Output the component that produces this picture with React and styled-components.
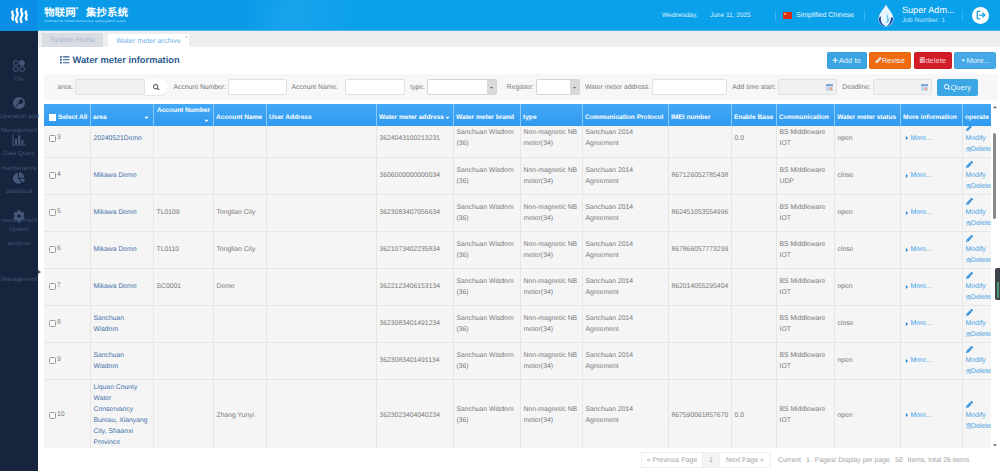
import styled, { createGlobalStyle } from 'styled-components'
import { FaList, FaSearch, FaPencilAlt, FaRegTrashAlt, FaPlus, FaCaretDown, FaCaretRight, FaCog, FaChartPie, FaTrashAlt, FaCaretUp } from 'react-icons/fa'
import { LogOut } from 'lucide-react'

const GlobalStyle = createGlobalStyle`
    html, body {
        margin: 0;
        height: 100%;
        overflow: hidden;
        background: #fff;
        font-family: "Liberation Sans", Arial, sans-serif;
        text-rendering: geometricPrecision;
    }
    * { box-sizing: border-box; }
`

const Page = styled.div`
    display: flex;
    height: 471px;
    width: 1000px;
    position: relative;
`

/* sidebar */
const Sidebar = styled.aside`
    width: 38px;
    flex: none;
    background: #16243d;
    display: flex;
    flex-direction: column;
    align-items: center;
    position: relative;
`
const LogoBox = styled.div`
    width: 100%;
    height: 31px;
    background: #0b8fe6;
    display: flex;
    align-items: center;
    justify-content: center;
    margin-bottom: 28px;
`
const NavItem = styled.div`
    height: ${p => p.$tall ? 'auto' : '37.7px'};
    margin-top: ${p => p.$tall ? '26px' : '0'};
    width: 100%;
    display: flex;
    flex-direction: column;
    align-items: center;
    color: #3f5474;
    font-size: 6.2px;
    line-height: 14.6px;
    text-align: center;
    white-space: nowrap;
`
const NavIcon = styled.div`
    height: 13px;
    display: flex;
    align-items: center;
    justify-content: center;
    color: #46597a;
    font-size: 12px;
    margin-bottom: 1px;
`
const Collapse = styled.div`
    position: absolute;
    right: -3px;
    top: 270px;
    width: 0;
    height: 0;
    border-top: 2px solid transparent;
    border-bottom: 2px solid transparent;
    border-left: 3px solid #555;
`

/* top bar */
const Main = styled.div`
    flex: 1;
    min-width: 0;
    display: flex;
    flex-direction: column;
`
const TopBar = styled.header`
    height: 31px;
    flex: none;
    display: flex;
    align-items: center;
    color: #fff;
    background: linear-gradient(103deg, #0a9ae8 0%, #0a9ae8 22%, #18a4ec 26%, #0ba0ea 34%, #0aa0ea 100%);
    border-bottom: 1px solid #45b4ef;
    padding-left: 6px;
`
const Brand = styled.div`
    width: 618px;
    flex: none;
    margin-top: -2px;
`
const BrandName = styled.div`
    font-family: "Noto Sans CJK SC", sans-serif;
    font-weight: 700;
    font-size: 10.6px;
    line-height: 13px;
    white-space: nowrap;
    sup {
        font-size: 5px;
        line-height: 0;
        margin-right: 5px;
    }
`
const BrandSub = styled.div`
    font-size: 2.9px;
    line-height: 4px;
    color: #b6e2fa;
    white-space: nowrap;
`
const DateText = styled.span`
    font-size: 6.5px;
    color: #dff3fd;
    width: ${p => p.$w}px;
    flex: none;
    white-space: nowrap;
`
const Divider = styled.span`
    width: 1px;
    height: 11px;
    background: #32b1ef;
    flex: none;
`
const Lang = styled.div`
    display: flex;
    align-items: center;
    gap: 4px;
    width: 88px;
    flex: none;
    padding-left: 7px;
    font-size: 7px;
    white-space: nowrap;
    color: #e3f5fe;
`
const UserBox = styled.div`
    display: flex;
    align-items: center;
    margin-left: 13px;
    gap: 8px;
    width: 84px;
    flex: none;
`
const UserName = styled.div`
    font-size: 9.1px;
    line-height: 11px;
    white-space: nowrap;
`
const UserJob = styled.div`
    font-size: 6.6px;
    line-height: 10px;
    color: #bfe7fb;
    white-space: nowrap;
`
const LogoutButton = styled.div`
    width: 17px;
    height: 17px;
    margin-left: 9px;
    border-radius: 50%;
    background: #fff;
    color: #0ba0ea;
    display: flex;
    align-items: center;
    justify-content: center;
`

/* tabs */
const TabBar = styled.div`
    height: 16px;
    flex: none;
    background: #eeeeee;
    display: flex;
    align-items: flex-end;
    padding-left: 4px;
    gap: 5px;
`
const Tab = styled.div`
    position: relative;
    height: ${p => p.$active ? '13px' : '14px'};
    width: ${p => p.$active ? '81px' : '61px'};
    background: ${p => p.$active ? '#fff' : '#d9dde3'};
    color: ${p => p.$active ? '#71b2e6' : '#a9b5c5'};
    font-size: 7.2px;
    line-height: 13px;
    text-align: center;
    white-space: nowrap;
`
const TabClose = styled.span`
    position: absolute;
    right: 1px;
    top: -2px;
    font-size: 6px;
    color: #9cc6ea;
`

/* page head */
const PageHead = styled.div`
    height: 25px;
    flex: none;
    display: flex;
    align-items: center;
    justify-content: space-between;
    padding: 1px 4px 0 22px;
`
const PageTitle = styled.h1`
    margin: 0;
    display: flex;
    align-items: center;
    gap: 3px;
    font-size: 9.3px;
    font-weight: 700;
    color: #2d5b8e;
    white-space: nowrap;
    svg { font-size: 9.5px; }
`
const Actions = styled.div`
    display: flex;
    gap: 2.5px;
`
const ActionButton = styled.button`
    width: ${p => p.$w}px;
    height: 17px;
    padding: 0;
    border: 1px solid rgba(0, 0, 0, 0.05);
    border-radius: 2px;
    background: ${p => p.$bg};
    color: ${p => p.$fg || '#e9f5fc'};
    font-family: inherit;
    font-size: 7.6px;
    display: flex;
    align-items: center;
    justify-content: center;
    white-space: nowrap;
    svg { font-size: 6.5px; }
`

/* filter band */
const Filters = styled.div`
    height: 26px;
    flex: none;
    margin: 2px 2px 4px 6px;
    background: #f7f7f7;
    border-radius: 2px;
    display: grid;
    grid-template-columns: 31px 93px 60px 59px 58px 60px 22px 70px 39px 44px 72px 75px 51px 59px 36px 59px 41px;
    align-items: center;
`
const FilterLabel = styled.label`
    font-size: 6.8px;
    color: #777;
    text-align: right;
    padding-right: ${p => p.$pad ?? 2}px;
    white-space: nowrap;
`
const TextBox = styled.div`
    height: 16px;
    background: ${p => p.$off ? '#f1f1f1' : '#fff'};
    border: 1px solid #e2e2e2;
    border-radius: 2px;
    display: flex;
    align-items: center;
    justify-content: flex-end;
    padding-right: 3px;
`
const SearchGroup = styled.div`
    display: flex;
    height: 16px;
`
const SearchInput = styled.div`
    width: 70px;
    background: #f1f1f1;
    border: 1px solid #e2e2e2;
    border-radius: 2px 0 0 2px;
`
const SearchButton = styled.div`
    flex: 1;
    background: #fff;
    border-radius: 0 8px 8px 0;
    box-shadow: 0 1px 0 #e6e6e6;
    color: #555;
    font-size: 6.5px;
    display: flex;
    align-items: center;
    justify-content: center;
`
const SelectBox = styled.div`
    height: 16px;
    background: #fff;
    border: 1px solid #d6d6d6;
    border-radius: 2px;
    display: flex;
    justify-content: flex-end;
    overflow: hidden;
`
const SelectArrow = styled.span`
    width: 9px;
    background: #d9d9d9;
    color: #666;
    font-size: 5px;
    display: flex;
    align-items: center;
    justify-content: center;
`
const QueryButton = styled.button`
    grid-column: 17;
    width: 41px;
    height: 17px;
    padding: 0;
    border: 0;
    border-radius: 2px;
    background: #3aa6e4;
    color: #e9f5fc;
    font-family: inherit;
    font-size: 7.6px;
    margin-left: 5px;
    display: flex;
    align-items: center;
    justify-content: center;
    svg { font-size: 6.5px; }
`

/* table */
const TableArea = styled.div`
    display: flex;
    height: 344px;
    flex: none;
    padding-left: 6px;
    position: relative;
`
const TableWrap = styled.div`
    width: 947px;
    height: 344px;
    flex: none;
    display: flex;
    flex-direction: column;
`
const Table = styled.table`
    table-layout: fixed;
    width: 947px;
    border-collapse: collapse;
`
const HeadRow = styled.tr`
    height: 22px;
    background: linear-gradient(#45a8f5, #2f9af0);
`
const Th = styled.th`
    padding: 5px 2.5px 0;
    border-left: 1px solid #8cc8f5;
    color: #fff;
    font-size: 6.6px;
    font-weight: 700;
    line-height: 9px;
    text-align: left;
    white-space: nowrap;
    vertical-align: middle;
    overflow: hidden;
    &:first-child {
        border-left: 0;
        padding-left: 5px;
    }
`
const HeadInner = styled.div`
    display: flex;
    align-items: center;
    justify-content: ${p => p.$split ? 'space-between' : 'flex-start'};
    svg { font-size: 7px; flex: none; }
`
const StackedTh = styled(Th)`
    padding: 0 2.5px;
`
const StackedHead = styled.div`
    display: flex;
    flex-direction: column;
    align-items: flex-end;
    line-height: 8px;
    svg { font-size: 7px; margin-top: 2px; }
`
const BodyClip = styled.div`
    flex: 1;
    overflow: hidden;
`
const ScrolledTable = styled(Table)`
    margin-top: -6px;
`
const Row = styled.tr`
    height: ${p => p.$h}px;
    background: #f5f5f5;
    border-bottom: 1px solid #e6e6e6;
`
const Td = styled.td`
    padding: 0 3px;
    border-left: 1px solid #e6e6e6;
    color: #7a7a7a;
    font-size: 6.8px;
    line-height: 11px;
    vertical-align: middle;
    overflow: hidden;
    &:first-child { border-left: 0; }
    &:last-child { padding-right: 0; }
`
const CheckCell = styled.div`
    display: flex;
    align-items: center;
    gap: 1px;
    padding-left: 2px;
`
const RowNumber = styled.span`
    margin-top: -2px;
`
const Check = styled.span`
    width: 7px;
    height: 7px;
    flex: none;
    background: ${p => p.$head ? '#fff' : '#fbfbfb'};
    border: 1px solid ${p => p.$head ? '#fff' : '#999'};
    border-radius: ${p => p.$head ? '0' : '1.5px'};
    margin-right: ${p => p.$head ? '2px' : '0'};
`
const AreaLink = styled.span`
    display: block;
    max-width: 55.5px;
    color: #3f70a8;
`
const MoreLink = styled.span`
    display: flex;
    align-items: center;
    gap: 1px;
    color: #3fa3ea;
    svg { font-size: 6px; color: #1f86d8; }
`
const OpCell = styled.div`
    display: flex;
    flex-direction: column;
    color: #4ba3e3;
    font-size: 6.9px;
    white-space: nowrap;
`
const OpLine = styled.span`
    height: 11px;
    display: flex;
    align-items: center;
    svg {
        flex: none;
        font-size: ${p => p.$big ? 7 : 5.5}px;
        color: ${p => p.$big ? '#1f86d8' : '#5aa9e3'};
    }
`
const ScrollTrack = styled.div`
    width: 7px;
    height: 344px;
    display: flex;
    flex-direction: column;
    align-items: center;
    color: #666;
    font-size: 6px;
`
const ScrollThumb = styled.div`
    width: 3.5px;
    height: 86px;
    margin: 23px 0 auto;
    background: #8a8a8a;
    border-radius: 2px;
`
const SideHandle = styled.div`
    position: absolute;
    right: 0;
    top: 268px;
    width: 5px;
    height: 32px;
    border-radius: 2px 0 0 2px;
    background: #3f444c;
    display: flex;
    align-items: flex-end;
    padding: 0 0 2px 2px;
    &::after {
        content: '';
        width: 2px;
        height: 16px;
        background: #4f9a74;
    }
`

/* pager */
const Pager = styled.div`
    height: 16px;
    flex: none;
    margin: 4px 0 0 604px;
    display: flex;
    align-items: center;
    font-size: 6.9px;
    color: #a3a3a3;
    white-space: nowrap;
`
const PagerButton = styled.div`
    width: ${p => p.$w}px;
    height: 16px;
    border: 1px solid #eeeeee;
    margin-left: -1px;
    background: ${p => p.$on ? '#f3f3f3' : '#fff'};
    display: flex;
    align-items: center;
    justify-content: center;
`
const PagerInfo = styled.div`
    margin-left: 7px;
    display: flex;
    align-items: center;
    gap: 5px;
`

const columns = [46, 63, 60, 53, 110, 77, 67, 62, 86, 63, 45, 58, 66, 62, 29]

const base = {
    brand: 'Sanchuan Wisdom (36)',
    type: 'Non-magnetic NB meter(34)',
    protocol: 'Sanchuan 2014 Agreement',
}

const rows = [
    { id: 3, area: '20240521Demo', address: '3624043100213231', base: '0.0', link: 'IOT', status: 'open' },
    { id: 4, area: 'Mikawa Demo', address: '3606000000000034', imei: '867126052785438', link: 'UDP', status: 'close' },
    { id: 5, area: 'Mikawa Demo', number: 'TL0109', name: 'Tongliao City', address: '3623083407056634', imei: '862451053554996', link: 'IOT', status: 'open' },
    { id: 6, area: 'Mikawa Demo', number: 'TL0110', name: 'Tongliao City', address: '3621073402235834', imei: '867866057773299', link: 'IOT', status: 'close' },
    { id: 7, area: 'Mikawa Demo', number: 'SC0001', name: 'Demo', address: '3622123406153134', imei: '862014055295404', link: 'IOT', status: 'open' },
    { id: 8, area: 'Sanchuan Wisdom', address: '3623083401491234', link: 'IOT', status: 'close' },
    { id: 9, area: 'Sanchuan Wisdom', address: '3623083401491134', link: 'IOT', status: 'open' },
    { id: 10, area: 'Liquan County Water Conservancy Bureau, Xianyang City, Shaanxi Province', name: 'Zhang Yunyi', address: '3623023404040234', imei: '867590061857670', base: '0.0', link: 'IOT', status: 'open', height: 72 },
]

function Cols() {
    return (
        <colgroup>
            {columns.map((w, i) => <col key={i} width={w} />)}
        </colgroup>
    )
}

function WaveLogo() {
    return (
        <svg width="19" height="17" viewBox="0 0 19 17" fill="none" stroke="#fff" strokeWidth="2.3" strokeLinecap="round">
            <path d="M2.5 4.5 c-1.5 2 1.5 3 0.5 4.5 s-1 2 0 3.5" />
            <path d="M7 2 c-2 2.5 2 4 0.5 6.5 s-2 3.5 -0.5 6.5" />
            <path d="M11.5 2 c-2 2.5 2 4 0.5 6.5 s-2 3.5 -0.5 6.5" />
            <path d="M16 4.5 c-1.5 2 1.5 3 0.5 4.5 s-1 2 0 3.5" />
        </svg>
    )
}

function FileIcon() {
    return (
        <svg width="12" height="12" viewBox="0 0 12 12" fill="none" stroke="#46597a" strokeWidth="1">
            <rect x="0.7" y="0.7" width="4.4" height="4.4" rx="1.2" />
            <circle cx="9" cy="3" r="2.4" fill="#46597a" />
            <rect x="0.7" y="6.9" width="4.4" height="4.4" rx="1.2" />
            <rect x="6.9" y="6.9" width="4.4" height="4.4" rx="1.2" />
        </svg>
    )
}

function WrenchIcon() {
    return (
        <svg width="12" height="12" viewBox="0 0 12 12">
            <circle cx="6" cy="6" r="6" fill="#46597a" />
            <path d="M3 9.2 L6.4 5.6 M6.2 4.6 a1.9 1.9 0 0 1 2.6 -1.6 l-1.2 1.2 0.7 0.7 1.2 -1.2 a1.9 1.9 0 0 1 -2.6 2.4" stroke="#16243d" strokeWidth="1.1" fill="#16243d" strokeLinecap="round" />
        </svg>
    )
}

function BarsIcon() {
    return (
        <svg width="14" height="12" viewBox="0 0 14 12" fill="#46597a">
            <rect x="0.5" y="0.5" width="1" height="11" />
            <rect x="0.5" y="10.5" width="13" height="1" />
            <rect x="3" y="5" width="2" height="5" />
            <rect x="6.2" y="1.5" width="2" height="8.5" />
            <rect x="9.4" y="6" width="2" height="4" />
        </svg>
    )
}

function DropIcon() {
    return (
        <svg width="16" height="23" viewBox="0 0 16 23">
            <path d="M8 0.5 C10 5 15.5 9.5 15.5 15 C15.5 19.5 12 22.5 8 22.5 C4 22.5 0.5 19.5 0.5 15 C0.5 9.5 6 5 8 0.5 Z" fill="#e6f6fe" />
            <path d="M3 13 C2 17 4 21 8 22 C4.5 22.5 0.8 19.5 1 15 C1.2 13 2 12 3 13 Z" fill="#173d92" />
            <path d="M15 14 C15.5 18 12 22 9 22 C11.5 20 13 17 13 13 Z" fill="#1c4ea8" />
            <path d="M8 8 C9 11 11 13 11 16 C11 18 9.5 19 8 19 C9.5 17 9 12 8 8 Z" fill="#6fc6f0" />
        </svg>
    )
}

function FlagIcon() {
    return (
        <svg width="9" height="7" viewBox="0 0 9 7">
            <rect width="9" height="7" fill="#d92a1c" />
            <circle cx="2" cy="2" r="1" fill="#ffd83a" />
            <circle cx="4" cy="1" r="0.35" fill="#ffd83a" />
            <circle cx="4.3" cy="2.6" r="0.35" fill="#ffd83a" />
        </svg>
    )
}

function CalendarIcon() {
    return (
        <svg width="7" height="7" viewBox="0 0 7 7">
            <rect width="7" height="7" fill="#c9d9ee" />
            <rect width="7" height="2" fill="#7ea6d8" />
            <rect x="3.5" y="3.5" width="2.5" height="2.5" fill="#eea58a" />
        </svg>
    )
}

function OperateCell() {
    return (
        <OpCell>
            <OpLine $big><FaPencilAlt /></OpLine>
            <OpLine>Modify</OpLine>
            <OpLine><FaRegTrashAlt />Delete</OpLine>
        </OpCell>
    )
}

export default function App() {
    return (
        <Page>
            <GlobalStyle />
            <Sidebar>
                <LogoBox><WaveLogo /></LogoBox>
                <NavItem><NavIcon><FileIcon /></NavIcon>File</NavItem>
                <NavItem><NavIcon><WrenchIcon /></NavIcon>Operation and<br />Management</NavItem>
                <NavItem><NavIcon><BarsIcon /></NavIcon>Data Query<br />maintenance</NavItem>
                <NavItem><NavIcon><FaChartPie /></NavIcon>Statistical<br />&nbsp;<br />management</NavItem>
                <NavItem><NavIcon><FaCog /></NavIcon>System<br />analysis</NavItem>
                <NavItem $tall>Management</NavItem>
                <Collapse />
            </Sidebar>
            <Main>
                <TopBar>
                    <Brand>
                        <BrandName>物联网<sup>®</sup> 集抄系统</BrandName>
                        <BrandSub>INTERNET OF THINGS Remote meter reading platform system</BrandSub>
                    </Brand>
                    <DateText $w={48}>Wednesday,</DateText>
                    <DateText $w={65}>June 11, 2025</DateText>
                    <Divider />
                    <Lang><FlagIcon />Simplified Chinese</Lang>
                    <Divider />
                    <UserBox>
                        <DropIcon />
                        <div>
                            <UserName>Super Adm...</UserName>
                            <UserJob>Job Number: 1</UserJob>
                        </div>
                    </UserBox>
                    <Divider />
                    <LogoutButton><LogOut size={10} strokeWidth={3} /></LogoutButton>
                </TopBar>
                <TabBar>
                    <Tab>System Home</Tab>
                    <Tab $active>Water meter archive<TabClose>×</TabClose></Tab>
                </TabBar>
                <PageHead>
                    <PageTitle><FaList />Water meter information</PageTitle>
                    <Actions>
                        <ActionButton $w={40} $bg="#3ba5e3"><FaPlus />Add to</ActionButton>
                        <ActionButton $w={42} $bg="#f06a10"><FaPencilAlt />Revise</ActionButton>
                        <ActionButton $w={38} $bg="#d21d29" $fg="#f6c9cc"><FaTrashAlt />delete</ActionButton>
                        <ActionButton $w={42} $bg="#45a9e8"><FaCaretDown />More...</ActionButton>
                    </Actions>
                </PageHead>
                <Filters>
                    <FilterLabel>area:</FilterLabel>
                    <SearchGroup>
                        <SearchInput />
                        <SearchButton><FaSearch /></SearchButton>
                    </SearchGroup>
                    <FilterLabel>Account Number:</FilterLabel>
                    <TextBox />
                    <FilterLabel $pad={7}>Account Name:</FilterLabel>
                    <TextBox />
                    <FilterLabel>type:</FilterLabel>
                    <SelectBox><SelectArrow><FaCaretDown /></SelectArrow></SelectBox>
                    <FilterLabel>Register:</FilterLabel>
                    <SelectBox><SelectArrow><FaCaretDown /></SelectArrow></SelectBox>
                    <FilterLabel>Water meter address:</FilterLabel>
                    <TextBox />
                    <FilterLabel>Add time start:</FilterLabel>
                    <TextBox $off><CalendarIcon /></TextBox>
                    <FilterLabel>Deadline:</FilterLabel>
                    <TextBox $off><CalendarIcon /></TextBox>
                    <QueryButton><FaSearch />Query</QueryButton>
                </Filters>
                <TableArea>
                    <TableWrap>
                        <Table>
                            <Cols />
                            <thead>
                                <HeadRow>
                                    <Th><HeadInner><Check $head />Select All</HeadInner></Th>
                                    <Th><HeadInner $split>area<FaCaretDown /></HeadInner></Th>
                                    <StackedTh><StackedHead>Account Number<FaCaretDown /></StackedHead></StackedTh>
                                    <Th>Account Name</Th>
                                    <Th>User Address</Th>
                                    <Th><HeadInner>Water meter address<FaCaretDown /></HeadInner></Th>
                                    <Th>Water meter brand</Th>
                                    <Th>type</Th>
                                    <Th>Communication Protocol</Th>
                                    <Th>IMEI number</Th>
                                    <Th>Enable Base</Th>
                                    <Th>Communication</Th>
                                    <Th>Water meter status</Th>
                                    <Th>More information</Th>
                                    <Th>operate</Th>
                                </HeadRow>
                            </thead>
                        </Table>
                        <BodyClip>
                            <ScrolledTable>
                                <Cols />
                                <tbody>
                                    {rows.map(r => (
                                        <Row key={r.id} $h={r.height || 37}>
                                            <Td><CheckCell><Check /><RowNumber>{r.id}</RowNumber></CheckCell></Td>
                                            <Td><AreaLink>{r.area}</AreaLink></Td>
                                            <Td>{r.number}</Td>
                                            <Td>{r.name}</Td>
                                            <Td></Td>
                                            <Td>{r.address}</Td>
                                            <Td>{base.brand}</Td>
                                            <Td>{base.type}</Td>
                                            <Td>{base.protocol}</Td>
                                            <Td>{r.imei}</Td>
                                            <Td>{r.base}</Td>
                                            <Td>BS Middleware {r.link}</Td>
                                            <Td>{r.status}</Td>
                                            <Td><MoreLink><FaCaretRight />More...</MoreLink></Td>
                                            <Td><OperateCell /></Td>
                                        </Row>
                                    ))}
                                </tbody>
                            </ScrolledTable>
                        </BodyClip>
                    </TableWrap>
                    <ScrollTrack>
                        <FaCaretUp />
                        <ScrollThumb />
                        <FaCaretDown />
                    </ScrollTrack>
                </TableArea>
                <Pager>
                    <PagerButton $w={62}>« Previous Page</PagerButton>
                    <PagerButton $w={18} $on>1</PagerButton>
                    <PagerButton $w={52}>Next Page »</PagerButton>
                    <PagerInfo>
                        <span>Current</span>
                        <span>1</span>
                        <span>Pages/ Display per page</span>
                        <span>50</span>
                        <span>Items, total 26 items</span>
                    </PagerInfo>
                </Pager>
                <SideHandle />
            </Main>
        </Page>
    )
}
